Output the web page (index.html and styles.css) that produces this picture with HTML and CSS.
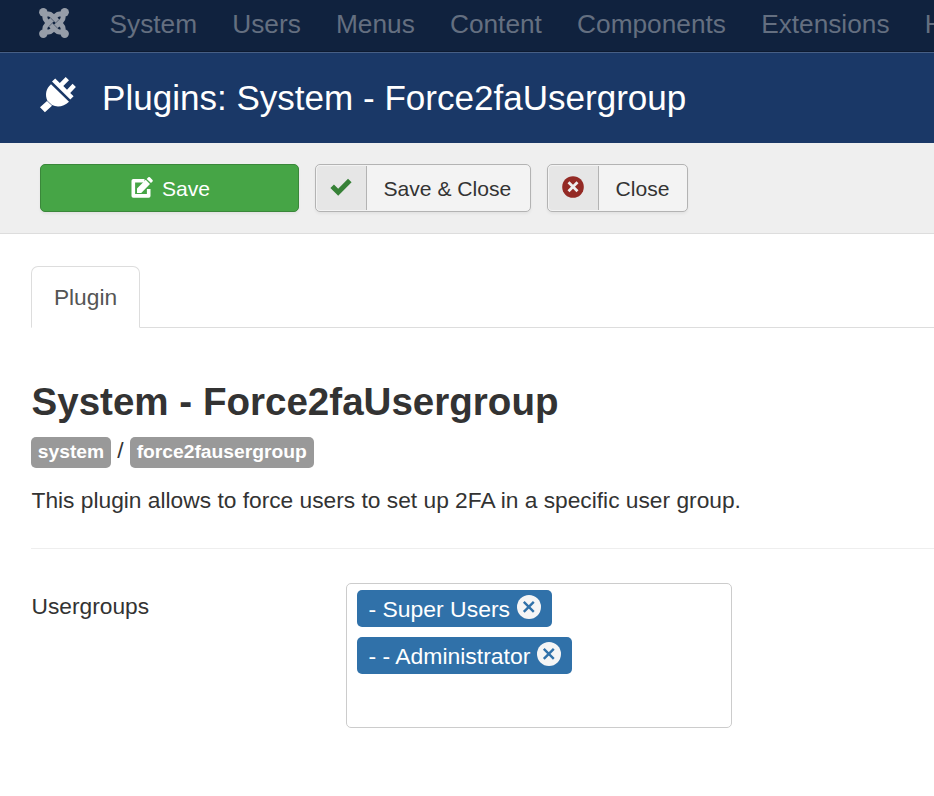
FILE: index.html
```html
<!DOCTYPE html>
<html lang="en">
<head>
<meta charset="utf-8">
<title>Plugins: System - Force2faUsergroup</title>
<link rel="stylesheet" href="styles.css">
</head>
<body>
<nav class="navbar">
  <a class="brand">
    <svg viewBox="0 0 30 30" width="30" height="30">
      <g fill="currentColor"><circle cx="4.300" cy="4.300" r="4.200"/><circle cx="25.700" cy="4.300" r="4.200"/><circle cx="4.300" cy="25.700" r="4.200"/><circle cx="25.700" cy="25.700" r="4.200"/></g>
      <g fill="none" stroke="currentColor" stroke-width="5">
        <path d="M5.900 4.900v4.600q0 1.800 1.500 3.300l9.800 9.800q1.500 1.500 3.300 1.500h4.600"/>
        <path d="M5.900 25.100v-4.600q0-1.800 1.500-3.300l9.800-9.800q1.500-1.500 3.300-1.500h4.600"/>
        <path d="M4.900 5.900h4.600q1.800 0 3.300 1.500l9.800 9.800q1.500 1.500 1.500 3.300v4.600"/>
        <path d="M4.900 24.100h4.600q1.800 0 3.300-1.500l9.800-9.800q1.500-1.500 1.500-3.300V4.900"/>
      </g>
      <path class="weave" d="M11.300 9.700l3.700 3.700M20.300 11.300l-3.700 3.700M18.700 20.300L15 16.600M9.700 18.700l3.700-3.700"/>
    </svg>
  </a>
  <a>System</a><a>Users</a><a>Menus</a><a>Content</a><a>Components</a><a>Extensions</a><a>Help</a>
</nav>
<header class="header">
  <svg class="plug" viewBox="0 0 36 36" width="36" height="36" fill="#fff">
    <path d="M0 30.300L7 23.900l5 4.800-7.100 6.500zM11 7.300L29 24.700c-4.800 4.800-11.500 5.900-17 3.400L7.400 23.700C4.700 17.800 6 11.600 11 7.300z"/>
    <path d="M12 4.600l3.200-3.100 4.600 4.500L25.700 0l3.300 3.200-5.700 5.900 3.700 3.600L32.600 6.800l3.300 3.200-5.700 5.900 3.400 3.300-3.300 3.200z"/>
  </svg>
  <h1>Plugins: System - Force2faUsergroup</h1>
</header>
<div class="toolbar">
  <button class="btn save"><svg viewBox="0 0 22 22" width="22" height="22"><path d="M13.500 3.700H2.300v15.200h15.400V12" fill="none" stroke="#fff" stroke-width="3.600" stroke-linejoin="round"/><path d="M6 16v-4.400L14.700 2.800l4.300 4.300-8.800 8.900zM15.700 1.900L17.300.3q.8-.6 1.600 0l2.600 2.600q.7.800 0 1.600L20 6z" fill="#fff"/></svg>Save</button>
  <button class="btn"><span class="icon"><svg viewBox="0 0 22 18" width="22" height="18"><path d="M2.200 8.200l6 6L19.800 2.500" fill="none" stroke="#378137" stroke-width="5"/></svg></span><span class="label">Save &amp; Close</span></button>
  <button class="btn"><span class="icon"><svg viewBox="0 0 22 22" width="22" height="22"><circle cx="11" cy="11" r="10.800" fill="#942a25"/><path d="M6.500 6.300l9 9m0-9l-9 9" stroke="#eee" stroke-width="2.800"/></svg></span><span class="label">Close</span></button>
</div>
<main>
  <div class="tabs"><a class="tab">Plugin</a></div>
  <h2>System - Force2faUsergroup</h2>
  <div class="labels"><span class="badge">system</span><span>/</span><span class="badge">force2fausergroup</span></div>
  <p>This plugin allows to force users to set up 2FA in a specific user group.</p>
  <hr>
  <div class="control">
    <label>Usergroups</label>
    <div class="choices">
      <span class="choice">- Super Users<svg viewBox="0 0 24 24" width="24" height="24"><circle cx="12" cy="12" r="12" fill="#f5f5f5"/><path d="M6.800 6.800l10 10m0-10l-10 10" stroke="#3071a9" stroke-width="2.400"/></svg></span>
      <span class="choice">- - Administrator<svg viewBox="0 0 24 24" width="24" height="24"><circle cx="12" cy="12" r="12" fill="#f5f5f5"/><path d="M6.800 6.800l10 10m0-10l-10 10" stroke="#3071a9" stroke-width="2.400"/></svg></span>
    </div>
  </div>
</main>
</body>
</html>
```
FILE: styles.css
```css
* { box-sizing: border-box; }
body {
  margin: 0;
  overflow: hidden;
  background: #fff;
  color: #333;
  font: 22.75px/32px "Liberation Sans", Arial, sans-serif;
}
svg { display: block; flex: none; }
.navbar {
  display: flex;
  height: 52px;
  padding: 8px 0 0 39px;
  background: #10223e;
  border-bottom: 1px solid #0d1a30;
  color: #646f80;
  font-size: 26.25px;
  white-space: nowrap;
}
.navbar a { flex: none; margin-right: 35.2px; }
.navbar .brand { margin-right: 40.5px; color: #969da8; }
.weave { fill: none; stroke: #3c4960; stroke-width: .7; }
.header {
  display: flex;
  height: 91px;
  padding: 0 0 0 40px;
  background: #1a3867;
  border-top: 1px solid #475f85;
  color: #fff;
}
.plug { margin: 24px 26px 0 0; }
h1 { margin: 25px 0 0; font-size: 35.05px; line-height: 40px; font-weight: 400; white-space: nowrap; }
.toolbar {
  display: flex;
  gap: 16px;
  height: 91px;
  padding: 21px 40px;
  background: #efefef;
  border-bottom: 1px solid #ddd;
}
.btn {
  display: flex;
  height: 48px;
  padding: 1px;
  border: 1px solid #b3b3b3;
  border-radius: 5px;
  background: #f3f3f3;
  box-shadow: 0 2px 3px rgba(0, 0, 0, .05);
  color: #333;
  font: 21.1px/46px "Liberation Sans", Arial, sans-serif;
}
.save {
  width: 259px;
  padding: 2px 0 0 2px;
  justify-content: center;
  align-items: center;
  gap: 9px;
  border-color: #3a873a;
  background: #46a546;
  color: #fff;
}
.save svg { margin-top: -2px; }
.icon {
  display: flex;
  width: 50px;
  height: 44px;
  align-items: center;
  justify-content: center;
  padding: 0 1px 2px 0;
  border-right: 1px solid #b3b3b3;
  border-radius: 3px 0 0 3px;
  background: #e6e6e6;
}
.btn .label { width: 162px; padding-left: 16.5px; text-align: left; white-space: nowrap; }
.btn:last-child .label { width: 87px; }
main { padding: 32px 0 0 31px; }
.tabs { display: flex; height: 62px; border-bottom: 1px solid #ddd; }
.tab {
  height: 62px;
  width: 109px;
  padding-top: 14px;
  border: 1px solid #ddd;
  border-bottom-color: #fff;
  border-radius: 7px 7px 0 0;
  background: #fff;
  color: #555;
  text-align: center;
}
h2 { margin: 56px 0 0; padding-left: .5px; font-size: 38.55px; line-height: 36px; }
.labels { display: flex; gap: 6.3px; margin-top: 17px; height: 31px; line-height: 27px; }
.badge {
  padding: 0 6.8px;
  border-radius: 5px;
  background: #999;
  color: #fff;
  font-size: 19.25px;
  font-weight: 700;
  line-height: 29px;
}
p { margin: 16px 0 0; padding-left: .5px; white-space: nowrap; }
hr { height: 1px; margin: 32px 0 34px; border: 0; background: #eee; }
.control { display: flex; }
.control label { width: 315px; padding: 7px 0 0 .5px; }
.choices {
  display: flex;
  flex-direction: column;
  align-items: flex-start;
  gap: 10px;
  width: 386px;
  height: 145px;
  padding: 6px 10px;
  border: 1px solid #ccc;
  border-radius: 5px;
}
.choice {
  display: flex;
  gap: 6.5px;
  height: 37px;
  padding: 5px 11px 0 11.5px;
  border-radius: 5px;
  background: #3071a9;
  color: #fff;
  font-size: 22.95px;
  line-height: 28px;
  white-space: nowrap;
}
```
